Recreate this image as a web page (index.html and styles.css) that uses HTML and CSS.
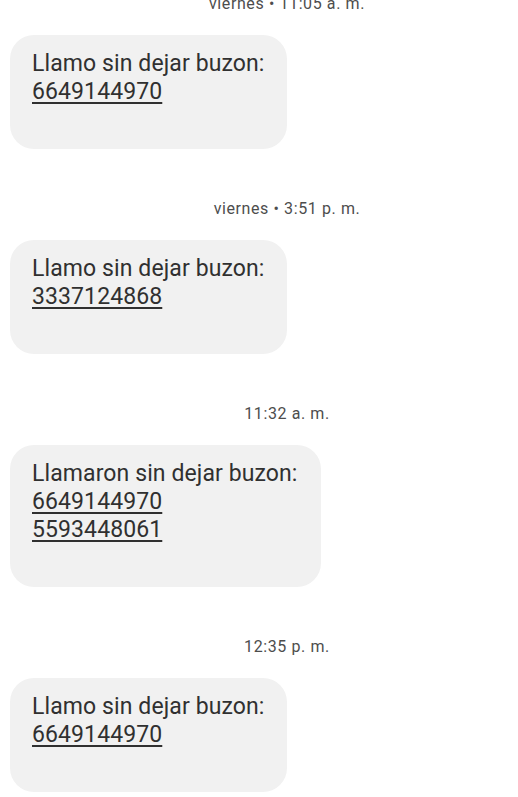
FILE: index.html
```html
<!DOCTYPE html>
<html lang="es">
<head>
    <meta charset="UTF-8">
    <meta name="viewport" content="width=device-width, initial-scale=1.0">
    <title>Mensajes</title>
    <link rel="stylesheet" href="styles.css">
</head>
<body>
    <div class="thread">
        <!-- viernes, mañana -->
        <div class="stamp">viernes • 11:05 a. m.</div>
        <div class="bubble">
            Llamo sin dejar buzon:<br>
            <a class="phone" href="#">6649144970</a>
        </div>

        <div class="stamp">viernes • 3:51 p. m.</div>
        <div class="bubble">
            Llamo sin dejar buzon:<br>
            <a class="phone" href="#">3337124868</a>
        </div>

        <div class="stamp">11:32 a. m.</div>
        <div class="bubble">
            Llamaron sin dejar buzon:<br>
            <a class="phone" href="#">6649144970</a><br>
            <a class="phone" href="#">5593448061</a>
        </div>

        <div class="stamp">12:35 p. m.</div>
        <div class="bubble">
            Llamo sin dejar buzon:<br>
            <a class="phone" href="#">6649144970</a>
        </div>
    </div>
</body>
</html>
```

FILE: styles.css
```css
/* Reset */
html, body {
    margin: 0;
    padding: 0;
    background: #ffffff;
    font-family: Roboto, "Noto Sans", sans-serif;
}

/* Conversation */
.thread {
    display: flex;
    flex-direction: column;
    align-items: flex-start;
    margin-top: -6px;
    padding: 0 10px;
}

/* Timestamps */
.stamp {
    align-self: stretch;
    text-align: center;
    padding-left: 56px;
    font-size: 16px;
    letter-spacing: 0.6px;
    line-height: 20px;
    color: #4d4d4d;
    margin-bottom: 21px;
}

/* Message bubbles */
.bubble {
    background: #f1f1f1;
    color: #303030;
    border-radius: 24px;
    padding: 15px 23px 43px 22px;
    font-size: 23px;
    letter-spacing: 0.1px;
    line-height: 28px;
    margin-bottom: 50px;
}

.phone {
    color: inherit;
    text-decoration: underline;
    text-decoration-thickness: 2px;
    text-underline-offset: 3px;
}
```
